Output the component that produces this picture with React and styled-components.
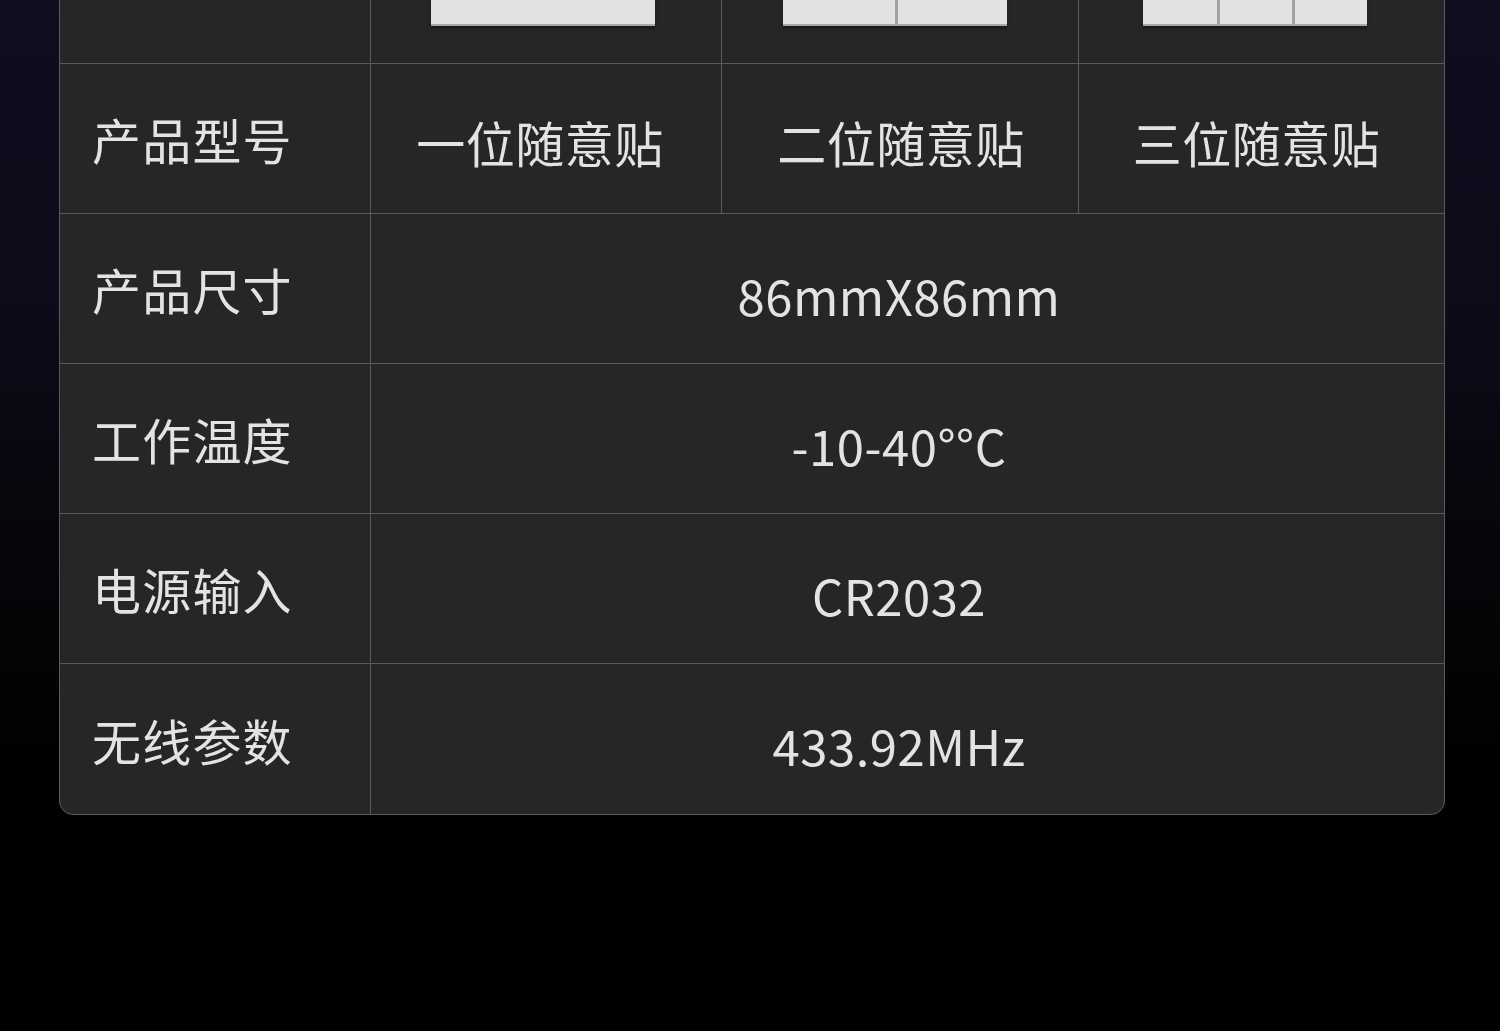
import styled, { createGlobalStyle } from "styled-components";

const GlobalStyle = createGlobalStyle`
  html, body {
    margin: 0;
    padding: 0;
    background: #000;
  }
  body {
    font-family: "Noto Sans CJK SC", "Noto Sans", sans-serif;
  }
`;

const Page = styled.div`
  width: 1500px;
  height: 1031px;
  overflow: hidden;
  background: linear-gradient(
    180deg,
    #0f0d1e 0%,
    #0c0b19 30%,
    #060509 55%,
    #010101 72%,
    #000 100%
  );
`;

const Table = styled.div`
  margin: -237px 0 0 59px;
  width: 1386px;
  box-sizing: border-box;
  display: grid;
  grid-template-columns: 311px 351px 357px 1fr;
  background: #262628;
  border: 1px solid #5a5a5c;
  border-radius: 14px;
  overflow: hidden;
`;

const Cell = styled.div`
  box-sizing: border-box;
  height: ${(p) => (p.$tall ? 300 : 150)}px;
  grid-column: ${(p) => (p.$span ? `span ${p.$span}` : "auto")};
  display: flex;
  align-items: center;
  justify-content: ${(p) => (p.$label ? "flex-start" : "center")};
  padding: ${(p) =>
    p.$label ? "0 0 0 32px" : p.$wide ? "11px 17px 0 0" : "5px 0 0 0"};
  border-right: ${(p) => (p.$last ? "none" : "1px solid #5a5a5c")};
  border-bottom: ${(p) => (p.$bottom ? "none" : "1px solid #5a5a5c")};
  color: #e3e3e5;
  font-size: 49px;
  line-height: 1;
  letter-spacing: ${(p) => (p.$label ? "1.2px" : "0.5px")};
  white-space: nowrap;
`;

const Panel = styled.div`
  width: 224px;
  height: 224px;
  box-sizing: border-box;
  display: grid;
  grid-template-columns: repeat(${(p) => p.$keys}, 1fr);
  background: #e2e2e4;
  border-bottom: 2px solid #a8a8aa;
  box-shadow: 0 2px 3px rgba(0, 0, 0, 0.4);
`;

const Key = styled.div`
  border-left: ${(p) => (p.$first ? "none" : "3px solid #a2a2a4")};
  position: relative;
`;

const Dot = styled.span`
  position: absolute;
  left: 50%;
  bottom: 24px;
  width: 3px;
  height: 3px;
  margin-left: -1px;
  border-radius: 50%;
  background: #9a9a9c;
`;

const Switch = ({ keys, x }) => (
  <Panel $keys={keys} style={{ marginLeft: x }}>
    {Array.from({ length: keys }).map((_, i) => (
      <Key key={i} $first={i === 0}>
        {keys === 3 && i === 2 && <Dot />}
      </Key>
    ))}
  </Panel>
);

const specs = [
  { label: "产品尺寸", value: "86mmX86mm" },
  { label: "工作温度", value: "-10-40°°C" },
  { label: "电源输入", value: "CR2032" },
  { label: "无线参数", value: "433.92MHz" },
];

export default function App() {
  return (
    <Page>
      <GlobalStyle />
      <Table>
        <Cell $tall $label />
        <Cell $tall style={{ paddingTop: 0 }}>
          <Switch keys={1} x={-6} />
        </Cell>
        <Cell $tall style={{ paddingTop: 0 }}>
          <Switch keys={2} x={-10} />
        </Cell>
        <Cell $tall $last style={{ paddingTop: 0 }}>
          <Switch keys={3} x={-14} />
        </Cell>

        <Cell $label>产品型号</Cell>
        <Cell style={{ paddingRight: 12 }}>一位随意贴</Cell>
        <Cell style={{ paddingLeft: 2 }}>二位随意贴</Cell>
        <Cell $last style={{ paddingRight: 10 }}>
          三位随意贴
        </Cell>

        {specs.map((s, i) => {
          const bottom = i === specs.length - 1;
          return [
            <Cell key={s.label} $label $bottom={bottom}>
              {s.label}
            </Cell>,
            <Cell key={s.value} $span={3} $wide $last $bottom={bottom}>
              {s.value}
            </Cell>,
          ];
        })}
      </Table>
    </Page>
  );
}
